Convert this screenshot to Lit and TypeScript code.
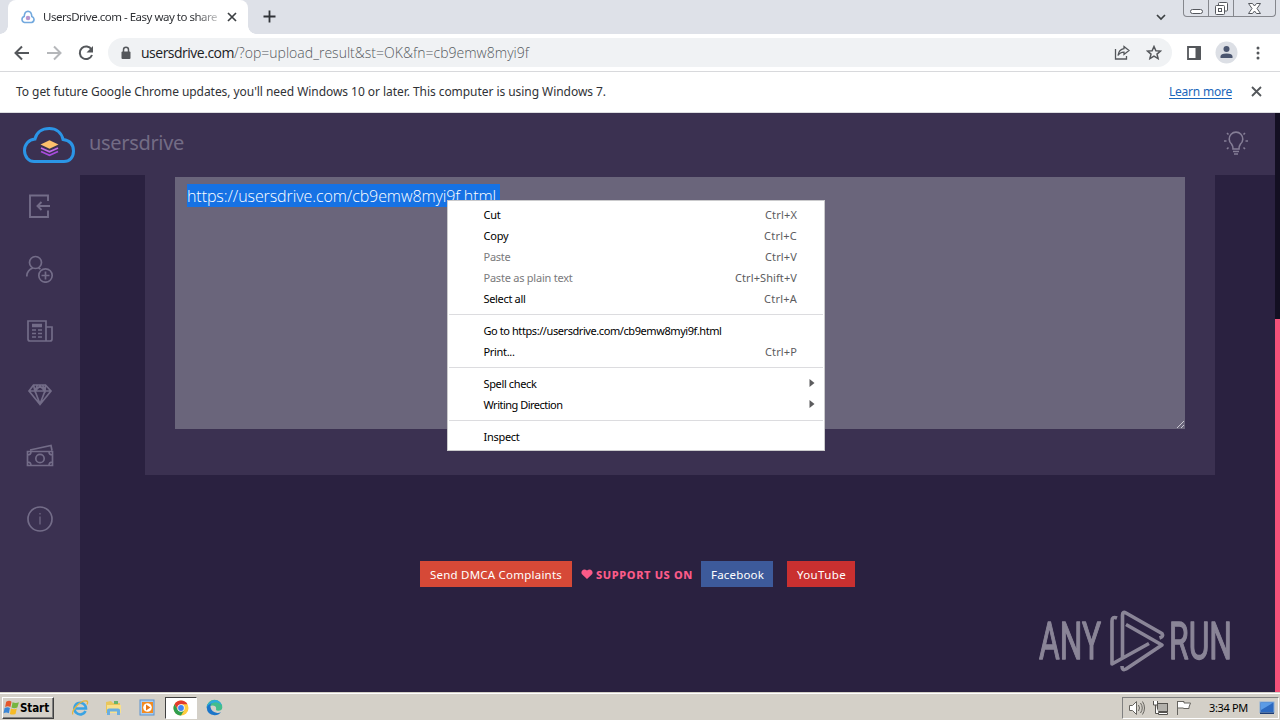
import { LitElement, html, css, svg } from "lit";
import { customElement, property } from "lit/decorators.js";

/** A single line of text whose tracking is adjusted to fill a given width. */
@customElement("fit-text")
class FitText extends LitElement {
  @property() text = "";
  @property({ type: Number }) w = 0;
  static styles = css`
    :host { display: inline-block; white-space: pre; flex: none; }
    .t { display: inline-block; }
  `;
  updated() {
    const s = this.renderRoot.querySelector(".t") as HTMLElement;
    s.style.letterSpacing = "0px";
    const natural = s.getBoundingClientRect().width;
    s.style.letterSpacing = (this.w - natural) / Math.max(1, this.text.length) + "px";
  }
  render() {
    return html`<span class="t">${this.text}</span>`;
  }
}

const fit = (text: string, w: number, cls = "") =>
  html`<fit-text class=${cls} .text=${text} .w=${w}></fit-text>`;

type Item = { label: string; w: number; key?: string; kw?: number; off?: boolean; sub?: boolean };

const MENU: Item[][] = [
  [
    { label: "Cut", w: 17, key: "Ctrl+X", kw: 32 },
    { label: "Copy", w: 25, key: "Ctrl+C", kw: 33 },
    { label: "Paste", w: 27, key: "Ctrl+V", kw: 32, off: true },
    { label: "Paste as plain text", w: 89, key: "Ctrl+Shift+V", kw: 62, off: true },
    { label: "Select all", w: 42, key: "Ctrl+A", kw: 33 },
  ],
  [
    { label: "Go to https://usersdrive.com/cb9emw8myi9f.html", w: 238 },
    { label: "Print...", w: 31, key: "Ctrl+P", kw: 32 },
  ],
  [
    { label: "Spell check", w: 53, sub: true },
    { label: "Writing Direction", w: 79, sub: true },
  ],
  [{ label: "Inspect", w: 36 }],
];

const SIDE = [
  svg`<path d="M22 9V3.500H4V25h18v-6.500M24 14H11.500M15.500 10l-4 4 4 4" stroke-width="1.900"/>`,
  svg`<circle cx="9.500" cy="7.500" r="6"/><path d="M.8 21.500c0-4 2-7 6-8.500M12.500 13l2 1"/><circle cx="19.500" cy="20.500" r="6.700"/><path d="M19.500 16.500v8M15.500 20.500h8"/>`,
  svg`<path d="M2 4h18v20H4q-2 0-2-2zM20 10h6v12q0 2-2 2h-5"/><path d="M6 8.500h10" stroke-width="3.500"/><path d="M6 13h4M12 13h4M6 16.500h4M12 16.500h4M6 20h4M12 20h4"/>`,
  svg`<path d="M7.500 5h12L25 11 14 24.500 3 11zM3 11h22M9 11l5 13 5-13-2.500-6M9 11l2.500-6M7.500 5L9 11l5-5 5 5 .5-6"/>`,
  svg`<path d="M1.500 9.500h25v14h-25zM4 8l21-4.500 1 5M1.500 13q3.500 0 3.500-3.500M26.500 13q-3.500 0-3.500-3.500M1.500 20q3.500 0 3.500 3.500M26.500 20q-3.500 0-3.500 3.500" /><circle cx="14" cy="16.500" r="4.200"/>`,
  svg`<circle cx="14" cy="14" r="12"/><path d="M14 11.500v8M14 8v1.500" stroke-width="1.200"/>`,
];

@customElement("app-root")
class AppRoot extends LitElement {
  static styles = css`
    :host {
      display: flex; flex-direction: column; width: 1280px; height: 720px; overflow: hidden;
      position: relative; background: #2a2140; color: #202124;
      font-family: "Noto Sans", "Open Sans", sans-serif; font-size: 12px;
    }
    * { box-sizing: border-box; }
    svg { display: block; flex: none; }
    .tabs { height: 34px; flex: none; background: #dee1e8; display: flex; padding-left: 8px; }
    .tab {
      width: 240px; background: #fff; border-radius: 8px 8px 0 0; display: flex; align-items: center;
      padding: 0 10px 0 13px; position: relative;
    }
    .tab::before, .tab::after {
      content: ""; position: absolute; bottom: 0; width: 8px; height: 8px;
    }
    .tab::before { left: -8px; background: radial-gradient(circle at 0 0, #dee1e8 7.500px, #fff 8px); }
    .tab::after { right: -8px; background: radial-gradient(circle at 100% 0, #dee1e8 7.500px, #fff 8px); }
    .title {
      width: 176px; margin-left: 8px; overflow: hidden; font-size: 11.500px; line-height: 18px; height: 18px; color: #303236;
      mask-image: linear-gradient(90deg, #000 152px, #0004 174px);
    }
    .x { margin-left: 8px; }
    .plus { margin: 10px 0 0 15px; }
    .grow { flex: 1; }
    .chev { margin: 13px 17px 0 0; }
    .win {
      display: flex; width: 93px; height: 17px; margin-right: 4px; border: 1px solid #85878d; border-top: 0;
      border-radius: 0 0 4px 4px; overflow: hidden;
    }
    .win div { border-right: 1px solid #85878d; width: 25px; display: grid; place-items: center; }
    .win div:last-child { border: 0; flex: 1; }
    .bar { height: 38px; flex: none; background: #fff; display: flex; align-items: center; border-bottom: 1px solid #d8d9dc; padding: 0 14px; }
    .back { margin-right: 16px; }
    .fwd { margin-right: 16px; }
    .omni { margin-left: 14px; width: 1064px; height: 29px; border-radius: 15px; background: #f0f2f4; display: flex; align-items: center; padding: 0 10px 0 12px; font: 400 14px/19px "Open Sans", "Noto Sans", sans-serif; }
    .lock { margin-right: 9px; }
    .path { color: #55595e; font-weight: 300; }
    .star { margin-left: 16px; }
    .panel-ic { margin-left: 15px; }
    .avatar { margin-left: 14px; }
    .dots { margin-left: 18px; }
    .info { height: 41px; flex: none; background: #fff; display: flex; align-items: center; padding: 0 18px 1px 16px; border-bottom: 1px solid #dcdde0; color: #303236; }
    .link { color: #1a66bb; border-bottom: 1px solid #1a66bb; line-height: 12px; height: 13px; margin-top: 1px; }
    .info svg { margin-left: 19px; }
    .page { flex: 1; min-height: 0; display: flex; }
    .site { width: 1275px; display: flex; flex-direction: column; }
    .scroll { width: 5px; background: linear-gradient(#130f22 206px, #f4517a 206px); }
    .head { height: 62px; flex: none; background: #3b3151; display: flex; align-items: center; padding: 0 25px 0 22px; color: #736c85; }
    .logo { margin-top: 1px; }
    .brand { font-size: 20px; line-height: 26px; margin: -3px 0 0 13px; color: #736c85; }
    .bulb { margin-top: -2px; }
    .body { flex: 1; display: flex; min-height: 0; }
    .side { width: 80px; background: #3b3151; display: flex; flex-direction: column; align-items: center; padding: 17px 0 0; gap: 34.600px; }
    .side svg { fill: none; stroke: #736c88; stroke-width: 1.700; }
    .main { flex: 1; display: flex; flex-direction: column; align-items: flex-start; }
    .panel { width: 1070px; height: 300px; background: #3b3151; padding: 2px 30px 0; margin-left: 65px; }
    .area { height: 252px; background: #6a657b; padding: 7px 12px; position: relative; font: 300 16px/23px "Open Sans", "Noto Sans", sans-serif; color: #fff; }
    .sel { background: #1672e4; display: inline-block; height: 23px; padding-right: 4px; line-height: 25px; }
    .grip { position: absolute; right: 0; bottom: 0; }
    .foot { margin: 86px 0 0 340px; width: 435px; display: flex; height: 26px; align-items: center; color: #fff; font-size: 11.500px; }
    .btn { height: 26px; display: grid; align-items: center; padding: 1px 0 0 10px; }
    .dmca { width: 152px; background: #d64937; }
    .fb { width: 72px; background: #3d5a9b; margin-left: 8px; }
    .yt { width: 68px; background: #c93030; margin-left: 14px; }
    .heart { margin: 0 3px 0 9px; }
    .sup { color: #fb5b88; font-weight: 800; font-size: 11px; }
    .menu { position: absolute; left: 447px; top: 200px; width: 378px; height: 251px; background: #fff; border: 1px solid #cacacc; padding: 3px 0; font-size: 11px; color: #000; }
    .group + .group { border-top: 1px solid #dcdcdf; margin: 5px 1px 0; padding: 5px 0 0; }
    .item { height: 21px; display: flex; align-items: center; justify-content: space-between; padding: 0 27px 0 35.500px; }
    .group + .group .item { padding: 0 26px 0 34.500px; }
    .item .key { color: #5c5c5e; }
    .off { color: #7a7a7c; }
    .group + .group .sub { padding-right: 8px; }
    .arrow { margin-top: -2px; }
    .mark { position: absolute; left: 1036px; top: 606px; opacity: 0.54; overflow: visible; }
    .task { height: 28px; flex: none; background: #d4d0c8; border-top: 1px solid #d4d0c8; box-shadow: inset 0 1px #fff; display: flex; align-items: center; padding: 2px 1px 0 2px; color: #000; }
    .start { width: 52px; height: 22px; border: 1px solid; border-color: #fff #404040 #404040 #fff; box-shadow: inset -1px -1px #808080; display: flex; align-items: center; padding-left: 0; font: bold 11.500px "DejaVu Sans Condensed", "DejaVu Sans", sans-serif; }
    .quick { display: flex; align-items: center; margin-left: 17px; }
    .q2 { margin-left: 16px; }
    .q3 { margin: 0 10px 0 17px; }
    .on { width: 32px; height: 22px; background: #fff; border: 1px solid; border-color: #404040 #fff #fff #404040; display: grid; place-items: center; margin: 0 9px 0 -1px; }
    .tray { width: 157px; height: 22px; border: 1px solid; border-color: #808080 #fff #fff #808080; display: flex; align-items: center; padding: 0 1px 0 5px; font-size: 11px; gap: 7px; }
    .net { margin-left: -1px; }
    .clock { margin: 0 4px 0 9px; }
  `;

  render() {
    return html`
      <div class="tabs">
        <div class="tab">
          <svg width="14" height="14" viewBox="0 0 14 14" fill="none" stroke="#73a9de" stroke-width="1.600"><path d="M3.500 12.500h7q2.700-.5 2.500-3.500-.3-2-2.200-2.600Q10.500 1.500 7 1.300 3.500 1.500 3.200 6.400 1 7 1 9.500q.2 2.500 2.500 3z"/><circle cx="7" cy="8" r="1.500" fill="#d58cab" stroke="#b599d5"/></svg>
          <div class="title">${fit("UsersDrive.com - Easy way to share", 174)}</div>
          <svg class="x" width="10" height="10" viewBox="0 0 10 10" stroke="#3c4043" stroke-width="1.700"><path d="M1 1l8 8M9 1l-8 8"/></svg>
        </div>
        <svg class="plus" width="13" height="13" viewBox="0 0 13 13" stroke="#303338" stroke-width="1.800"><path d="M6.500 .5v12M.5 6.500h12"/></svg>
        <span class="grow"></span>
        <svg class="chev" width="10" height="9" viewBox="0 0 10 9" fill="none" stroke="#3c4043" stroke-width="1.700"><path d="M1 2l4 4 4-4"/></svg>
        <div class="win">
          <div><svg width="13" height="14" viewBox="0 0 13 14"><rect x=".5" y="8.500" width="12" height="4" rx="2" fill="#fff" stroke="#55585e"/></svg></div>
          <div><svg width="13" height="13" viewBox="0 0 13 13" fill="#fff" stroke="#55585e"><rect x="3.500" y=".5" width="9" height="8.500" rx="1"/><rect x=".5" y="3.500" width="9" height="9" rx="1"/><rect x="3.500" y="6.500" width="3" height="3"/></svg></div>
          <div><svg width="13" height="11" viewBox="0 0 13 11" fill="#fff" stroke="#55585e"><path d="M.5.5h4l2 2.500 2-2.500h4l-3.500 5 3.500 5h-4l-2-2.500-2 2.500h-4l3.500-5z"/></svg></div>
        </div>
      </div>
      <div class="bar">
        <svg class="back" width="16" height="16" viewBox="0 0 16 16" fill="none" stroke="#54575b" stroke-width="2"><path d="M15 8H2M8 1.500L1.500 8 8 14.500"/></svg>
        <svg class="fwd" width="16" height="16" viewBox="0 0 16 16" fill="none" stroke="#b5b7ba" stroke-width="2"><path d="M1 8h13M8 1.500L14.500 8 8 14.500"/></svg>
        <svg width="16" height="16" viewBox="0 0 16 16" fill="none" stroke="#54575b" stroke-width="2"><path d="M13.500 4.500A6.300 6.300 0 1 0 14 10"/><path d="M15 1v6.500H8.500z" fill="#54575b" stroke="none"/></svg>
        <div class="omni">
          <svg class="lock" width="12" height="14" viewBox="0 0 12 14"><rect x="1.500" y="5.500" width="9" height="7.500" rx="1" fill="#54575b"/><path d="M3.500 6V3.800a2.500 2.500 0 0 1 5 0V6" fill="none" stroke="#54575b" stroke-width="1.500"/></svg>
          ${fit("usersdrive.com", 93)}${fit("/?op=upload_result&st=OK&fn=cb9emw8myi9f", 295, "path")}
          <span class="grow"></span>
          <svg width="16" height="15" viewBox="0 0 16 15" fill="none" stroke="#54575b" stroke-width="1.300"><path d="M1.500 4v10h11v-3M10 1.500l5 4-5 4V7.200q-4 0-6 3.300.8-6 6-6.800z"/></svg>
          <svg class="star" width="16" height="15" viewBox="0 0 16 15" fill="none" stroke="#54575b" stroke-width="1.500"><path d="M8 1.500l1.900 4.200 4.600.4-3.500 3 1.100 4.500L8 11.200l-4.100 2.400L5 9.100l-3.500-3 4.600-.4z"/></svg>
        </div>
        <svg class="panel-ic" width="14" height="14" viewBox="0 0 14 14"><path d="M1 1h12v12H1z" fill="none" stroke="#54575b" stroke-width="1.800"/><path d="M8.500 1H14v12H8.500z" fill="#54575b"/></svg>
        <svg class="avatar" width="23" height="23" viewBox="0 0 23 23"><circle cx="11.500" cy="11.500" r="11" fill="#dcdfe5"/><circle cx="11.500" cy="8" r="3" fill="#4b5670"/><path d="M5.500 17v-1.500q0-3 6-3t6 3V17z" fill="#4b5670"/></svg>
        <svg class="dots" width="4" height="14" viewBox="0 0 4 14" fill="#54575b"><circle cx="2" cy="2" r="1.500"/><circle cx="2" cy="7" r="1.500"/><circle cx="2" cy="12" r="1.500"/></svg>
      </div>
      <div class="info">
        ${fit("To get future Google Chrome updates, you'll need Windows 10 or later. This computer is using Windows 7.", 590)}
        <span class="grow"></span>
        <span class="link">${fit("Learn more", 63)}</span>
        <svg width="11" height="11" viewBox="0 0 11 11" stroke="#54575b" stroke-width="1.800"><path d="M1 1l9 9M10 1l-9 9"/></svg>
      </div>
      <div class="page">
        <div class="site">
          <div class="head">
            <svg class="logo" width="54" height="38" viewBox="0 0 54 38" fill="none"><path d="M12 35.500h30c5.500 0 9.500-4 9.500-10.500S48 14.500 41 13.500C39.500 6.500 34 2.500 27.300 2.500 20 2.500 14.500 6.500 13 13 6.500 13.500 2.500 18.500 2.500 24.500 2.500 31 7 35.500 12 35.500z" stroke="#2b95e6" stroke-width="3"/><path d="M19 25.500l8.500 3.800L36 25.500" stroke="#a94bdd" stroke-width="1.800"/><path d="M19 22l8.500 3.800L36 22" stroke="#c06ae8" stroke-width="1.800"/><path d="M18.500 18.500l9-4.200 9 4.200-9 4.200z" fill="#fdc06c"/></svg>
            ${fit("usersdrive", 95, "brand")}
            <span class="grow"></span>
            <svg class="bulb" width="28" height="26" viewBox="0 0 28 26" fill="none" stroke="#857e96" stroke-width="1.600"><path d="M11 19q0-3-1.500-5a6.800 6.800 0 1 1 9 0Q17 16 17 19zM11 21.500h6M12 24h4M2 11h2.500M23.500 11H26M5 3l1.500 1.500M23 3l-1.500 1.500M5 19l1.500-1.500M23 19l-1.500-1.500"/></svg>
          </div>
          <div class="body">
            <div class="side">${SIDE.map((p) => html`<svg width="28" height="28" viewBox="0 0 28 28">${p}</svg>`)}</div>
            <div class="main">
              <div class="panel">
                <div class="area">
                  <span class="sel">${fit("https://usersdrive.com/cb9emw8myi9f.html", 309)}</span>
                  <svg class="grip" width="9" height="9" viewBox="0 0 9 9" stroke="#c9c6d1"><path d="M1 8l7-7M5 8l3-3"/></svg>
                </div>
              </div>
              <div class="foot">
                <div class="btn dmca">${fit("Send DMCA Complaints", 132)}</div>
                <svg class="heart" width="12" height="10" viewBox="0 0 12 10" fill="#fb5b88"><path d="M6 10L1 5.300C-1 2.500 2.500-1.500 6 1.600 9.500-1.500 13 2.500 11 5.300z"/></svg>
                ${fit("SUPPORT US ON", 97, "sup")}
                <div class="btn fb">${fit("Facebook", 53)}</div>
                <div class="btn yt">${fit("YouTube", 49)}</div>
              </div>
            </div>
          </div>
        </div>
        <div class="scroll"></div>
      </div>
      <div class="task">
        <div class="start">
          <svg width="17" height="17" viewBox="0 0 16 16"><path d="M3 2.500q3-1.500 5 0L7 7.500q-2.500-1.500-5 0z" fill="#e5572c"/><path d="M9 3q3 1.500 6 0l-1.500 5q-3 1.300-5.500 0z" fill="#76b541"/><path d="M1.500 8.500q3-1.500 5 0l-1 5q-2.500-1.500-5 0z" fill="#3b86d6"/><path d="M7.500 9q3 1.500 5.500 0l-1.200 5q-3 1.300-5.300 0z" fill="#f6bb26"/></svg>
          ${fit("Start", 29)}
        </div>
        <div class="quick">
          <svg width="18" height="18" viewBox="0 0 18 18" fill="none"><path d="M14.500 12a5.800 5.800 0 1 1 .5-2.500H5" stroke="#3aa3e3" stroke-width="2.600"/><path d="M2 15.500C-1 13 9 1 15.500 2q2 .5 .5 3.500" stroke="#e6b53c" stroke-width="1.300"/></svg>
          <svg class="q2" width="17" height="17" viewBox="0 0 17 17"><path d="M1 3l5-1 2 2h7v10H1z" fill="#e9c65c"/><path d="M2 6h14v8H2z" fill="#f8e08c"/><path d="M2 16v-5q0-1.500 2-1.500h9q2 0 2 1.500v5h-3v-3.500H5V16z" fill="#6aaee0"/><path d="M9 2h4v3H9z" fill="#67b36b"/></svg>
          <svg class="q3" width="17" height="17" viewBox="0 0 17 17"><rect x="1" y="1" width="14" height="15" fill="#a9cdf0" stroke="#5c94cf"/><rect x="3" y="3" width="11" height="11" fill="#f28b22"/><circle cx="8.500" cy="8.500" r="4.300" fill="#fff"/><path d="M7 5.500l4.500 3L7 11.500z" fill="#e87817"/></svg>
          <div class="on"><svg width="16" height="16" viewBox="0 0 16 16"><circle cx="8" cy="8" r="7.500" fill="#ffcd40"/><path d="M1.500 4.200A7.500 7.500 0 0 1 14.500 4.200H8L4.700 9.500z" fill="#e33b2e"/><path d="M1.500 4.200L4.700 9.800 8 11.500 11.300 10 8 15.500A7.500 7.500 0 0 1 1.500 4.200z" fill="#2f9e4f"/><circle cx="8" cy="8" r="3.700" fill="#fff"/><circle cx="8" cy="8" r="2.900" fill="#4285f4"/></svg></div>
          <svg width="17" height="17" viewBox="0 0 17 17"><path d="M.7 8.500a7.800 7.800 0 0 1 15.600 0q-.3 3.200-4 3.200-2.300 0-2.300-1.200.7-3-2-3.800Q5 5.800.7 8.500z" fill="#43bd8c"/><path d="M.7 8.500q0-4.500 6-5.500-3 2-2 6t6.500 5q2 .3 3.800-1-2.500 3.500-6.500 3.300Q1 15.500.7 8.500z" fill="#1b75c9"/><path d="M.7 8.500Q2 2 8.500 1 14 1 16 6.500 11 1.500 7 4 2.500 4.500.7 8.500z" fill="#2eabdd"/></svg>
        </div>
        <span class="grow"></span>
        <div class="tray">
          <svg width="18" height="16" viewBox="0 0 18 16" fill="#fff" stroke="#66645f"><path d="M1.500 5.500h3l4-4v13l-4-4h-3z"/><path d="M10.500 5q2 3 0 6M12.500 3q3.500 5 0 10M14.500 1.500q4 6.500 0 13" fill="none"/></svg>
          <svg class="net" width="17" height="16" viewBox="0 0 17 16" fill="#fff" stroke="#55534f"><rect x="5.500" y="3.500" width="10" height="8" fill="#b2b0ab"/><path d="M6.500 14.500h9v-2h-9zM1.500 1v4h4V1M3.500 5v8.500H7"/></svg>
          <svg width="17" height="16" viewBox="0 0 17 16" fill="#fff" stroke="#66645f"><path d="M1.500 1v14M1.500 1.500h6.500v1.500h6.500l-1.500 4v1.500H7.500V8h-6z"/></svg>
          ${fit("3:34 PM", 39, "clock")}
          <svg width="16" height="14" viewBox="0 0 16 14"><rect x="1" y="1" width="14" height="10.500" fill="#2c69c0" stroke="#88add8"/><path d="M1.500 1.500h13L2 9z" fill="#5b9be6"/><path d="M1 11.500h14V13H1z" fill="#1b3b75"/></svg>
        </div>
      </div>
      <svg class="mark" width="240" height="76" viewBox="0 0 240 76" fill="none" stroke="#dcdae2" stroke-width="3.600" stroke-linejoin="round">
        <g fill="#dcdae2" stroke-width="1.300" font-family="Roboto, sans-serif" font-size="51.500"><text x="3" y="53" textLength="62" lengthAdjust="spacingAndGlyphs">ANY</text><text x="133" y="53" textLength="63" lengthAdjust="spacingAndGlyphs">RUN</text></g>
        <path d="M81 12q-5-2-5 3V58L113 37.500M86.500 53V9q0-4 3.500-2l36 20.500q2 3-2.500 4.500M90 18.500l36 20.500-36 24q-4 2-4-3"/>
      </svg>
      <div class="menu">
        ${MENU.map((g) => html`<div class="group">${g.map((i) => html`
          <div class="item ${i.off ? "off" : ""} ${i.sub ? "sub" : ""}">
            ${fit(i.label, i.w)}
            ${i.key ? fit(i.key, i.kw!, "key") : ""}
            ${i.sub ? html`<svg class="arrow" width="6" height="8" viewBox="0 0 6 8"><path d="M.5 0l5 4-5 4z" fill="#5c5c5e"/></svg>` : ""}
          </div>`)}</div>`)}
      </div>
    `;
  }
}
